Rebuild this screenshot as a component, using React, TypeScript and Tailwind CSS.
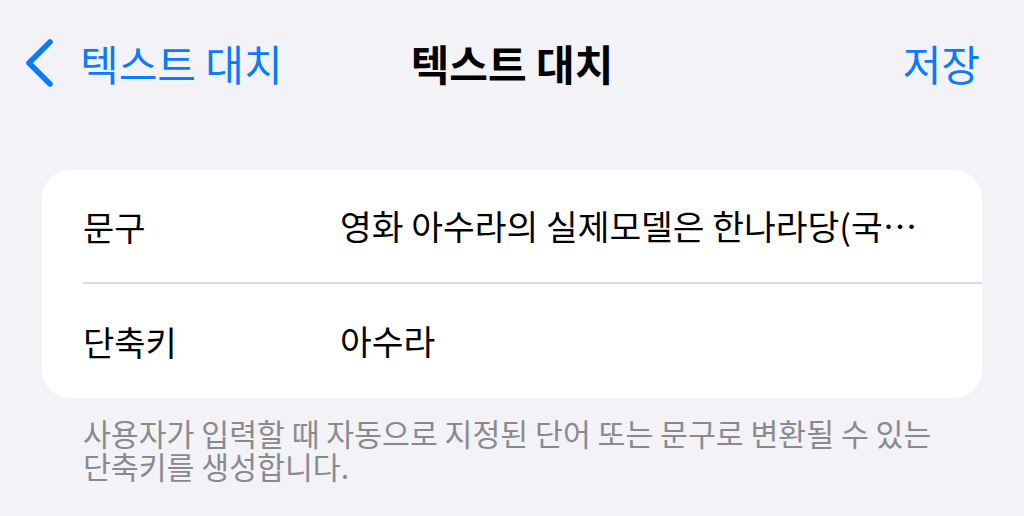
import React from "react";

const font = {
  fontFamily: '"Noto Sans CJK KR", "Noto Sans", sans-serif',
};

const Row = ({ label, value, divider }: { label: string; value: string; divider?: boolean }) => (
  <div className="flex h-[114px] items-center pl-[41px]">
    <div className={`flex h-full flex-1 items-center ${divider ? "border-b-2 border-[#dcdce0]" : ""}`}>
      <span className="w-[257px] shrink-0 text-[34px] text-black">{label}</span>
      <span className="truncate pr-[30px] text-[34.5px] text-black">{value}</span>
    </div>
  </div>
);

export default function App() {
  return (
    <div className="h-[516px] w-[1024px] overflow-hidden bg-[#f2f2f7]" style={font}>
      {/* navigation bar */}
      <div className="relative flex h-[130px] items-start pt-[38px]">
        <button className="flex items-center pl-[24px] text-[#0a7aff]">
          <svg width="30" height="50" viewBox="0 0 30 50" fill="none">
            <path d="M26 4 L5 25 L26 46" stroke="#0a7aff" strokeWidth="5.5" strokeLinecap="round" strokeLinejoin="round" />
          </svg>
          <span className="ml-[26px] text-[42px] leading-[50px]">텍스트 대치</span>
        </button>
        <div className="absolute left-0 right-0 top-[38px] text-center text-[42px] font-bold leading-[50px] text-black">
          텍스트 대치
        </div>
        <button className="ml-auto pr-[44px] text-[42px] leading-[50px] text-[#0a7aff]">저장</button>
      </div>

      {/* form card */}
      <div className="mx-[42px] mt-[40px] overflow-hidden rounded-[28px] bg-white">
        <Row label="문구" value="영화 아수라의 실제모델은 한나라당(국…" divider />
        <Row label="단축키" value="아수라" />
      </div>

      <p className="mt-[19px] break-keep px-[83px] text-[30.3px] leading-[33px] text-[#8a8a8e]">
        사용자가 입력할 때 자동으로 지정된 단어 또는 문구로 변환될 수 있는 단축키를 생성합니다.
      </p>
    </div>
  );
}
